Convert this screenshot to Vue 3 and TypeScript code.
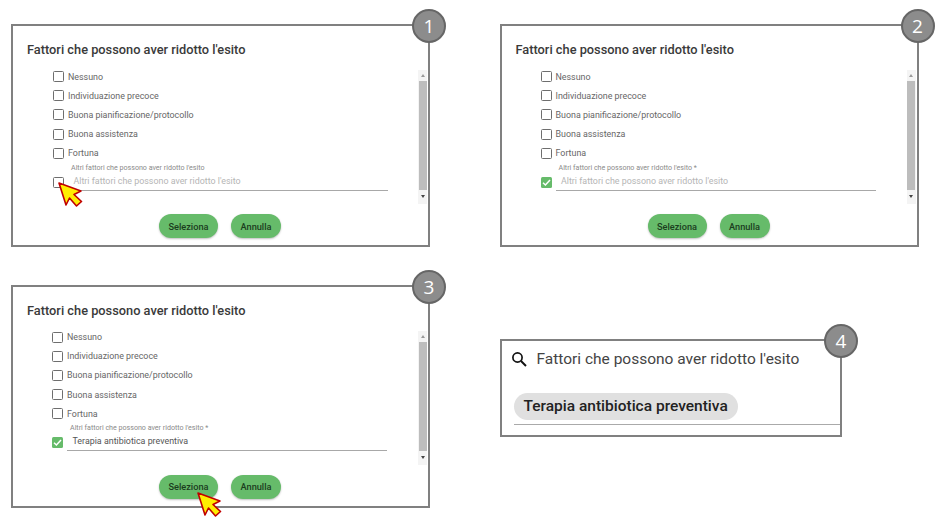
<template>
  <div class="page">
    <div v-for="p in panels" :key="p.id" class="panel">
      <h2 class="title">Fattori che possono aver ridotto l'esito</h2>
      <div class="scroller">
        <div class="list" :class="{ nudge: p.id === 1 }">
          <label v-for="o in options" :key="o" class="row">
            <span class="box"></span>
            <span>{{ o }}</span>
          </label>
          <div class="other">
            <span class="box" :class="{ checked: p.checked }">
              <svg v-if="p.checked" viewBox="0 0 11 11" width="11" height="11">
                <path d="M2 5.8 4.4 8 9 3" fill="none" stroke="#fff" stroke-width="1.5" />
              </svg>
            </span>
            <div class="field">
              <div class="field-label">Altri fattori che possono aver ridotto l'esito{{ p.checked ? ' *' : '' }}</div>
              <div class="field-value" :class="{ filled: p.value }">{{ p.value || "Altri fattori che possono aver ridotto l'esito" }}</div>
            </div>
          </div>
        </div>
        <div class="scrollbar">
          <i class="arrow up"></i>
          <div class="thumb"></div>
          <i class="arrow down"></i>
        </div>
      </div>
      <div class="actions">
        <button class="btn select">Seleziona</button>
        <button class="btn cancel">Annulla</button>
      </div>
      <span class="badge">{{ p.id }}</span>
      <svg v-if="p.cursor" class="cursor" :class="p.cursor" viewBox="0 0 25 25" width="25" height="25">
        <path d="M1 1 8 23 11.5 16 18.5 24 23.5 19.5 16 12.5 23 9Z" fill="#ffee00" stroke="#c00000" stroke-width="1.6" stroke-linejoin="round" />
      </svg>
    </div>

    <div class="summary">
      <div class="search">
        <svg viewBox="0 0 16 16" width="16" height="16">
          <circle cx="6.5" cy="6.5" r="4.6" fill="none" stroke="#111" stroke-width="1.7" />
          <path d="M10 10 15 15" stroke="#111" stroke-width="1.9" />
        </svg>
        <span>Fattori che possono aver ridotto l'esito</span>
      </div>
      <div class="chips">
        <span class="chip">Terapia antibiotica preventiva</span>
      </div>
      <span class="badge">4</span>
    </div>
  </div>
</template>

<script setup lang="ts">
interface Panel {
  id: number;
  checked: boolean;
  value: string;
  cursor: string;
}

const options = [
  'Nessuno',
  'Individuazione precoce',
  'Buona pianificazione/protocollo',
  'Buona assistenza',
  'Fortuna',
];

const panels: Panel[] = [
  { id: 1, checked: false, value: '', cursor: 'on-box' },
  { id: 2, checked: true, value: '', cursor: '' },
  { id: 3, checked: true, value: 'Terapia antibiotica preventiva', cursor: 'on-button' },
];
</script>

<style>
html,
body {
  background: #fff;
}
</style>

<style scoped>
.page {
  width: 938px;
  height: 522px;
  box-sizing: border-box;
  padding: 24px 0 0 11px;
  display: grid;
  grid-template-columns: 419px 419px;
  grid-template-rows: 223px 223px;
  column-gap: 69.5px;
  row-gap: 37.5px;
  font-family: Roboto, 'Liberation Sans', sans-serif;
  overflow: hidden;
}
.panel {
  position: relative;
  box-sizing: border-box;
  border: 2px solid #808080;
  background: #fff;
}
.title {
  margin: 15px 0 11px 14px;
  font-size: 12.8px;
  line-height: 18px;
  font-weight: 500;
  color: #3a3a3a;
}
.scroller {
  display: flex;
  justify-content: space-between;
  height: 134px;
  padding-right: 1px;
}
.list {
  padding-left: 39px;
  display: flex;
  flex-direction: column;
  gap: 6.2px;
  font-size: 8.9px;
  color: #666;
}
.list.nudge {
  padding-left: 40px;
}
.row {
  display: flex;
  align-items: center;
  gap: 4px;
  height: 13px;
}
.box {
  display: block;
  flex: none;
  box-sizing: border-box;
  width: 11px;
  height: 11px;
  border: 1.5px solid #6e6e6e;
  border-radius: 1.5px;
}
.box.checked {
  border: 0;
  background: #66bb6a;
}
.box svg {
  display: block;
}
.other {
  display: flex;
  align-items: flex-end;
  gap: 4px;
  margin-top: -2px;
  height: 27px;
}
.other .box {
  margin-bottom: 3px;
}
.field {
  width: 320px;
  height: 27px;
  box-sizing: border-box;
  border-bottom: 1px solid #a8a8a8;
}
.field-label {
  padding-left: 3px;
  font-size: 7.1px;
  line-height: 8px;
  color: #8a8a8a;
}
.field-value {
  padding: 3px 0 0 5.5px;
  font-size: 8.9px;
  line-height: 13px;
  color: #b5b5b5;
}
.field-value.filled {
  color: #555;
}
.scrollbar {
  width: 9px;
  height: 134px;
  background: #f4f4f4;
  display: flex;
  flex-direction: column;
  align-items: center;
  padding-top: 4px;
  box-sizing: border-box;
}
.thumb {
  width: 8px;
  height: 109px;
  margin: 4px 0 5px;
  background: #bdbdbd;
}
.arrow {
  width: 0;
  height: 0;
  border-left: 2px solid transparent;
  border-right: 2px solid transparent;
}
.arrow.up {
  border-bottom: 3px solid #999;
}
.arrow.down {
  border-top: 3px solid #444;
}
.actions {
  margin-top: 10px;
  display: flex;
  justify-content: center;
  gap: 13px;
  padding-right: 1px;
}
.btn {
  height: 24px;
  border: 0;
  border-radius: 12px;
  background: #66bb6a;
  box-shadow: 0 1px 2px rgba(0, 0, 0, 0.25);
  padding: 0;
  font-family: inherit;
  font-size: 9.2px;
  font-weight: 500;
  color: #1b3d1e;
}
.select {
  width: 59px;
}
.cancel {
  width: 50px;
}
.badge {
  position: absolute;
  top: -17px;
  right: -18px;
  width: 34px;
  height: 34px;
  box-sizing: border-box;
  border: 2px solid #666;
  border-radius: 50%;
  background: #8c8c8c;
  color: #fff;
  font-family: 'Open Sans', sans-serif;
  font-size: 19px;
  line-height: 30px;
  text-align: center;
}
.cursor {
  position: absolute;
}
.cursor.on-box {
  left: 45px;
  top: 156px;
}
.cursor.on-button {
  left: 184px;
  top: 205px;
}
.summary {
  position: relative;
  align-self: start;
  margin-top: 54px;
  width: 342.5px;
  height: 98px;
  box-sizing: border-box;
  border: 2px solid #808080;
  background: #fff;
}
.search {
  display: flex;
  align-items: center;
  gap: 10px;
  margin: 9px 0 0 9px;
  font-size: 15.5px;
  line-height: 18px;
  color: #444;
}
.chips {
  margin: 25px 0 0 12px;
  padding-bottom: 4px;
  border-bottom: 1px solid #aaa;
}
.chip {
  display: inline-block;
  height: 27px;
  line-height: 27px;
  padding: 0 10px;
  border-radius: 14px;
  background: #e0e0e0;
  font-size: 15.5px;
  font-weight: 500;
  color: #222;
}
</style>
